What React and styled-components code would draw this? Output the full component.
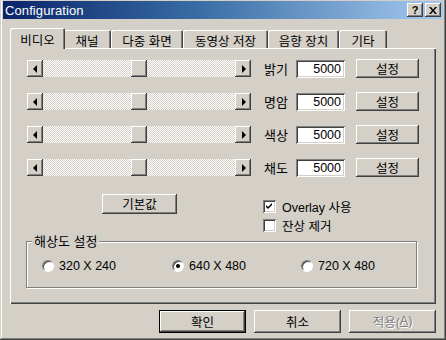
import React from 'react';
import styled, { createGlobalStyle } from 'styled-components';

const GlobalStyle = createGlobalStyle`
  html, body {
    margin: 0;
    padding: 0;
    background: #d4d0c8;
    overflow: hidden;
  }
  * {
    box-sizing: border-box;
  }
`;

const FONT = `"Liberation Sans", "Noto Sans CJK KR", sans-serif`;

const raised = `
  box-shadow:
    inset -1px -1px #404040,
    inset 1px 1px #ffffff,
    inset -2px -2px #808080,
    inset 2px 2px #d4d0c8;
`;

const sunken = `
  box-shadow:
    inset 1px 1px #808080,
    inset -1px -1px #ffffff,
    inset 2px 2px #404040,
    inset -2px -2px #d4d0c8;
`;

//------------Window-------------

const Window = styled.div`
  width: 446px;
  height: 340px;
  background: #d4d0c8;
  font-family: ${FONT};
  font-size: 12px;
  color: #000;
  padding: 1px 3px 3px 3px;
  display: flex;
  flex-direction: column;
  box-shadow:
    inset -1px -1px #404040,
    inset 1px 0 #d4d0c8,
    inset -2px -2px #808080,
    inset 2px 0 #ffffff;
`;

const TitleBar = styled.div`
  height: 18px;
  display: flex;
  align-items: center;
  padding: 0 2px 0 2px;
  background: linear-gradient(to right, #0a246a 0%, #3a6ea5 45%, #a6caf0 100%);
  color: #fff;
`;

const TitleText = styled.div`
  flex: 1;
  font-size: 13px;
  letter-spacing: 0.1px;
`;

const CaptionButton = styled.div`
  width: 16px;
  height: 14px;
  margin-left: ${p => p.$gap || 0}px;
  background: #d4d0c8;
  ${raised}
  color: #000;
  font-weight: bold;
  font-size: 11px;
  line-height: 14px;
  text-align: center;
  display: flex;
  align-items: center;
  justify-content: center;
`;

const Content = styled.div`
  padding: 9px 7px 0 7px;
  display: flex;
  flex-direction: column;
`;

//------------Tabs-------------

const TabStrip = styled.div`
  display: flex;
  align-items: flex-end;
  height: 20px;
  padding-left: 2px;
  position: relative;
  z-index: 1;
`;

const Tab = styled.div`
  width: ${p => p.$w}px;
  height: ${p => (p.$active ? 21 : 18)}px;
  margin: 0 ${p => (p.$active ? -2 : 0)}px ${p => (p.$active ? -1 : 0)}px;
  padding-top: ${p => (p.$active ? 2 : 1)}px;
  background: #d4d0c8;
  border-radius: 2px 2px 0 0;
  text-align: center;
  font-size: 12.5px;
  position: relative;
  z-index: ${p => (p.$active ? 2 : 1)};
  box-shadow:
    inset 1px 1px #ffffff,
    inset -1px 0 #404040,
    inset -2px 0 #808080;
`;

const Panel = styled.div`
  width: 426px;
  height: 256px;
  padding: 11px 0 0 17px;
  box-shadow:
    inset 1px 1px #ffffff,
    inset -1px -1px #404040,
    inset -2px -2px #808080;
  display: flex;
  flex-direction: column;
`;

//------------Slider rows-------------

const Rows = styled.div`
  display: flex;
  flex-direction: column;
  gap: 14px;
`;

const Row = styled.div`
  display: flex;
  align-items: center;
  height: 19px;
`;

const Scrollbar = styled.div`
  width: 224px;
  height: 17px;
  display: flex;
`;

const ArrowButton = styled.div`
  width: 16px;
  height: 17px;
  background: #d4d0c8;
  ${raised}
  display: flex;
  align-items: center;
  justify-content: center;
  &::after {
    content: '';
    width: 0;
    height: 0;
    border-top: 4px solid transparent;
    border-bottom: 4px solid transparent;
    ${p => (p.$dir === 'left' ? 'border-right: 4px solid #000; margin-left: -1px;' : 'border-left: 4px solid #000; margin-left: 1px;')}
  }
`;

const Track = styled.div`
  flex: 1;
  display: flex;
  justify-content: center;
  background-color: #d4d0c8;
  background-image: repeating-conic-gradient(#ffffff 0 25%, #d4d0c8 0 50%);
  background-size: 2px 2px;
`;

const Thumb = styled.div`
  width: 16px;
  height: 17px;
  background: #d4d0c8;
  ${raised}
`;

const Label = styled.div`
  width: 32px;
  margin-left: 13px;
  font-size: 13px;
`;

const Edit = styled.div`
  width: 49px;
  height: 18px;
  background: #fff;
  ${sunken}
  text-align: right;
  padding: 2px 4px 0 0;
  font-size: 12.5px;
`;

const Button = styled.div`
  width: ${p => p.$w}px;
  height: ${p => p.$h || 19}px;
  margin-left: ${p => p.$ml || 0}px;
  background: #d4d0c8;
  ${p =>
    p.$default
      ? `box-shadow:
    inset 0 0 0 1px #000,
    inset -2px -2px #404040,
    inset 2px 2px #ffffff,
    inset -3px -3px #808080;`
      : raised}
  display: flex;
  align-items: center;
  justify-content: center;
  font-size: 12.5px;
  color: ${p => (p.$disabled ? '#808080' : '#000')};
  text-shadow: ${p => (p.$disabled ? '1px 1px #ffffff' : 'none')};
  padding-bottom: 1px;
  u {
    text-decoration: underline;
  }
`;

//------------Options-------------

const Options = styled.div`
  display: flex;
  margin-top: 17px;
  height: 41px;
`;

const CheckList = styled.div`
  margin-left: 86px;
  margin-top: 3px;
  display: flex;
  flex-direction: column;
`;

const CheckItem = styled.div`
  height: 19px;
  display: flex;
  align-items: center;
  gap: 6px;
  font-size: 12.5px;
`;

const CheckBox = styled.div`
  width: 13px;
  height: 13px;
  background: #fff;
  ${sunken}
  display: flex;
  align-items: center;
  justify-content: center;
`;

//------------Group box-------------

const Group = styled.div`
  position: relative;
  width: 391px;
  height: 47px;
  margin: 6px 0 0 -1px;
  border: 1px solid #808080;
  box-shadow: inset 1px 1px #ffffff, 1px 1px #ffffff;
`;

const GroupLabel = styled.div`
  position: absolute;
  top: -8px;
  left: 5px;
  padding: 0 2px;
  background: #d4d0c8;
  font-size: 13px;
  line-height: 15px;
`;

const RadioRow = styled.div`
  display: grid;
  grid-template-columns: 130px 129px 120px;
  padding: 17px 0 0 15px;
`;

const RadioItem = styled.div`
  display: flex;
  align-items: center;
  gap: 5px;
  font-size: 12.5px;
`;

const Radio = styled.div`
  width: 12px;
  height: 12px;
  border-radius: 50%;
  border: 1px solid;
  border-color: #808080 #ffffff #ffffff #808080;
  box-shadow: inset 1px 1px #404040;
  background: #fff;
  display: flex;
  align-items: center;
  justify-content: center;
  &::after {
    content: '';
    width: 4px;
    height: 4px;
    border-radius: 50%;
    background: ${p => (p.$checked ? '#000' : 'transparent')};
  }
`;

//------------Footer-------------

const Footer = styled.div`
  display: flex;
  justify-content: flex-end;
  gap: 8px;
  margin-top: 6px;
`;

const tabs = [
  { label: '비디오', w: 55, active: true },
  { label: '채널', w: 48 },
  { label: '다중 화면', w: 72 },
  { label: '동영상 저장', w: 85 },
  { label: '음향 장치', w: 71 },
  { label: '기타', w: 48 },
];

const rows = ['밝기', '명암', '색상', '채도'];

const CheckMark = () => (
  <svg width="7" height="7" viewBox="0 0 7 7">
    <path d="M0 2 L2 4 L6 0 L6 2 L2 6 L0 4 Z" fill="#000" />
  </svg>
);

const CloseGlyph = () => (
  <svg width="8" height="7" viewBox="0 0 8 7">
    <path d="M0 0 H2 L4 2.5 L6 0 H8 L5 3.5 L8 7 H6 L4 4.5 L2 7 H0 L3 3.5 Z" fill="#000" />
  </svg>
);

export default function App() {
  return (
    <Window>
      <GlobalStyle />
      <TitleBar>
        <TitleText>Configuration</TitleText>
        <CaptionButton>?</CaptionButton>
        <CaptionButton $gap={2}>
          <CloseGlyph />
        </CaptionButton>
      </TitleBar>
      <Content>
        <TabStrip>
          {tabs.map(t => (
            <Tab key={t.label} $w={t.w} $active={t.active}>
              {t.label}
            </Tab>
          ))}
        </TabStrip>
        <Panel>
          <Rows>
            {rows.map(r => (
              <Row key={r}>
                <Scrollbar>
                  <ArrowButton $dir="left" />
                  <Track>
                    <Thumb />
                  </Track>
                  <ArrowButton $dir="right" />
                </Scrollbar>
                <Label>{r}</Label>
                <Edit>5000</Edit>
                <Button $w={63} $ml={11}>
                  설정
                </Button>
              </Row>
            ))}
          </Rows>
          <Options>
            <Button $w={75} $h={20} $ml={75}>
              기본값
            </Button>
            <CheckList>
              <CheckItem>
                <CheckBox>
                  <CheckMark />
                </CheckBox>
                Overlay 사용
              </CheckItem>
              <CheckItem>
                <CheckBox />
                잔상 제거
              </CheckItem>
            </CheckList>
          </Options>
          <Group>
            <GroupLabel>해상도 설정</GroupLabel>
            <RadioRow>
              <RadioItem>
                <Radio />
                320 X 240
              </RadioItem>
              <RadioItem>
                <Radio $checked />
                640 X 480
              </RadioItem>
              <RadioItem>
                <Radio />
                720 X 480
              </RadioItem>
            </RadioRow>
          </Group>
        </Panel>
        <Footer>
          <Button $w={87} $h={23} $default>
            확인
          </Button>
          <Button $w={87} $h={23}>
            취소
          </Button>
          <Button $w={87} $h={23} $disabled>
            적용(<u>A</u>)
          </Button>
        </Footer>
      </Content>
    </Window>
  );
}
